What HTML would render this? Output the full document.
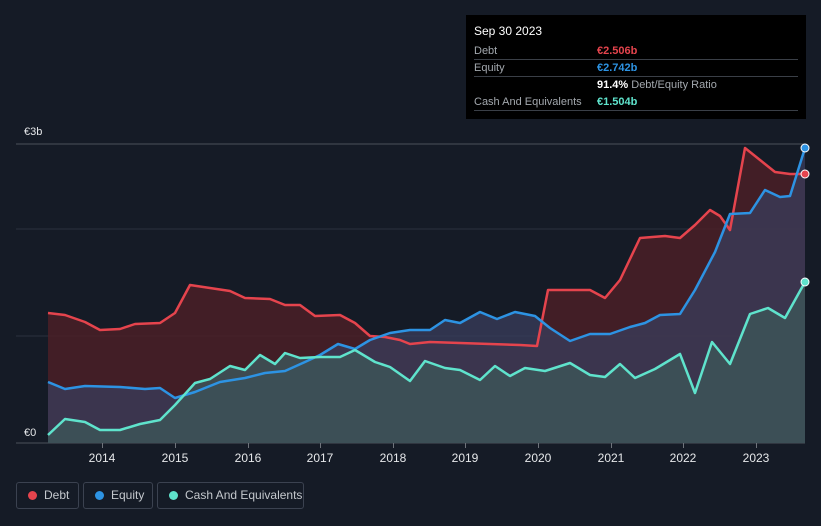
<!DOCTYPE html>
<html><head><meta charset="utf-8"><style>
body{margin:0;width:821px;height:526px;background:#151b26;font-family:"Liberation Sans",sans-serif;overflow:hidden;position:relative}
.tt{position:absolute;left:466px;top:15px;width:340px;height:104px;background:#000;color:#fff;font-size:11px}
.tt .r{position:absolute;left:8px;right:8px;border-bottom:1px solid #3a3f47;height:17px}
.tt .l{position:absolute;left:0;top:3px;color:#a3a8ae}
.tt .v{position:absolute;left:123px;top:3px;font-weight:bold}
.leg{position:absolute;top:482px;height:27px;border:1px solid #3b4250;border-radius:3px;color:#c4c8cd;font-size:12px;box-sizing:border-box;line-height:25px}
.leg i{position:absolute;left:11px;top:8px;width:9px;height:9px;border-radius:50%}
.leg span{position:absolute;left:27px}
</style></head><body>
<svg width="821" height="526" style="position:absolute;left:0;top:0">
<line x1="16" y1="144" x2="805" y2="144" stroke="#4a505a"/>
<line x1="16" y1="229" x2="805" y2="229" stroke="#2a313d"/>
<line x1="16" y1="336" x2="805" y2="336" stroke="#2a313d"/>
<line x1="16" y1="443" x2="805" y2="443" stroke="#4a505a"/>
<g fill="#6f747c"><rect x="102" y="443" width="1" height="5"/><rect x="175" y="443" width="1" height="5"/><rect x="248" y="443" width="1" height="5"/><rect x="320" y="443" width="1" height="5"/><rect x="393" y="443" width="1" height="5"/><rect x="465" y="443" width="1" height="5"/><rect x="538" y="443" width="1" height="5"/><rect x="611" y="443" width="1" height="5"/><rect x="683" y="443" width="1" height="5"/><rect x="756" y="443" width="1" height="5"/></g>
<polygon fill="#4a1e27" fill-opacity="0.85" points="48,443 48,313 65,315 85,322 100,330 120,329 135,324 160,323 175,313 190,285 210,288 230,291 245,298 270,299 285,305 300,305 315,316 340,315 355,323 370,336 385,337 400,340 410,344 430,342 460,343 490,344 520,345 537,346 548,290 590,290 605,298 620,280 640,238 665,236 680,238 695,225 710,210 720,216 730,230 745,148 760,160 775,172 790,174 805,174 805,443"/>
<polygon fill="#3a3d5c" fill-opacity="0.75" points="48,443 48,382 65,389 85,386 120,387 145,389 160,388 175,398 195,392 220,382 245,378 265,373 285,371 305,362 320,355 338,344 355,349 370,340 390,333 410,330 430,330 445,320 460,323 480,312 497,319 515,312 535,316 550,328 570,341 590,334 610,334 630,327 645,323 660,315 680,314 695,290 715,252 730,214 750,213 765,190 780,197 790,196 805,148 805,443"/>
<polygon fill="#3d5358" fill-opacity="0.85" points="48,443 48,435 65,419 85,422 100,430 120,430 140,424 160,420 175,405 195,383 210,379 230,366 245,370 260,355 275,364 285,353 300,358 320,357 340,357 355,350 375,362 390,367 410,381 425,361 445,368 460,370 480,380 495,366 510,376 525,368 545,371 570,363 590,375 605,377 620,364 635,378 655,369 680,354 695,393 712,342 730,364 750,314 768,308 785,318 805,282 805,443"/>
<g fill="none" stroke-width="2.5" stroke-linejoin="round">
<polyline stroke="#e5444d" points="48,313 65,315 85,322 100,330 120,329 135,324 160,323 175,313 190,285 210,288 230,291 245,298 270,299 285,305 300,305 315,316 340,315 355,323 370,336 385,337 400,340 410,344 430,342 460,343 490,344 520,345 537,346 548,290 590,290 605,298 620,280 640,238 665,236 680,238 695,225 710,210 720,216 730,230 745,148 760,160 775,172 790,174 805,174"/>
<polyline stroke="#2d93e3" points="48,382 65,389 85,386 120,387 145,389 160,388 175,398 195,392 220,382 245,378 265,373 285,371 305,362 320,355 338,344 355,349 370,340 390,333 410,330 430,330 445,320 460,323 480,312 497,319 515,312 535,316 550,328 570,341 590,334 610,334 630,327 645,323 660,315 680,314 695,290 715,252 730,214 750,213 765,190 780,197 790,196 805,148"/>
<polyline stroke="#5fe3cc" points="48,435 65,419 85,422 100,430 120,430 140,424 160,420 175,405 195,383 210,379 230,366 245,370 260,355 275,364 285,353 300,358 320,357 340,357 355,350 375,362 390,367 410,381 425,361 445,368 460,370 480,380 495,366 510,376 525,368 545,371 570,363 590,375 605,377 620,364 635,378 655,369 680,354 695,393 712,342 730,364 750,314 768,308 785,318 805,282"/>
</g>
<circle cx="805" cy="174" r="4" fill="#e5444d" stroke="#fff" stroke-width="1"/>
<circle cx="805" cy="148" r="4" fill="#2d93e3" stroke="#fff" stroke-width="1"/>
<circle cx="805" cy="282" r="4" fill="#5fe3cc" stroke="#fff" stroke-width="1"/>
<g fill="#e6e8ea" font-size="11" font-family="Liberation Sans,sans-serif">
<text x="24" y="135">€3b</text><text x="24" y="436">€0</text>
<g text-anchor="middle" font-size="12"><text x="102" y="462">2014</text><text x="175" y="462">2015</text><text x="248" y="462">2016</text><text x="320" y="462">2017</text><text x="393" y="462">2018</text><text x="465" y="462">2019</text><text x="538" y="462">2020</text><text x="611" y="462">2021</text><text x="683" y="462">2022</text><text x="756" y="462">2023</text></g>
</g>
</svg>
<div class="tt">
<div style="position:absolute;left:8px;top:9px;font-size:12px">Sep 30 2023</div>
<div class="r" style="top:27px"></div>
<div class="r" style="top:27px;border:none"><span class="l">Debt</span><span class="v" style="color:#e5444d">€2.506b</span></div>
<div class="r" style="top:44px"><span class="l">Equity</span><span class="v" style="color:#2d93e3">€2.742b</span></div>
<div class="r" style="top:61px;border:none"><span class="v" style="color:#fff">91.4% <span style="font-weight:normal;color:#a3a8ae">Debt/Equity Ratio</span></span></div>
<div class="r" style="top:78px"><span class="l">Cash And Equivalents</span><span class="v" style="color:#5fe3cc">€1.504b</span></div>
</div>
<div class="leg" style="left:16px;width:63px"><i style="background:#e5444d"></i><span>Debt</span></div>
<div class="leg" style="left:83px;width:70px"><i style="background:#2d93e3"></i><span>Equity</span></div>
<div class="leg" style="left:157px;width:147px"><i style="background:#5fe3cc"></i><span>Cash And Equivalents</span></div>
</body></html>
